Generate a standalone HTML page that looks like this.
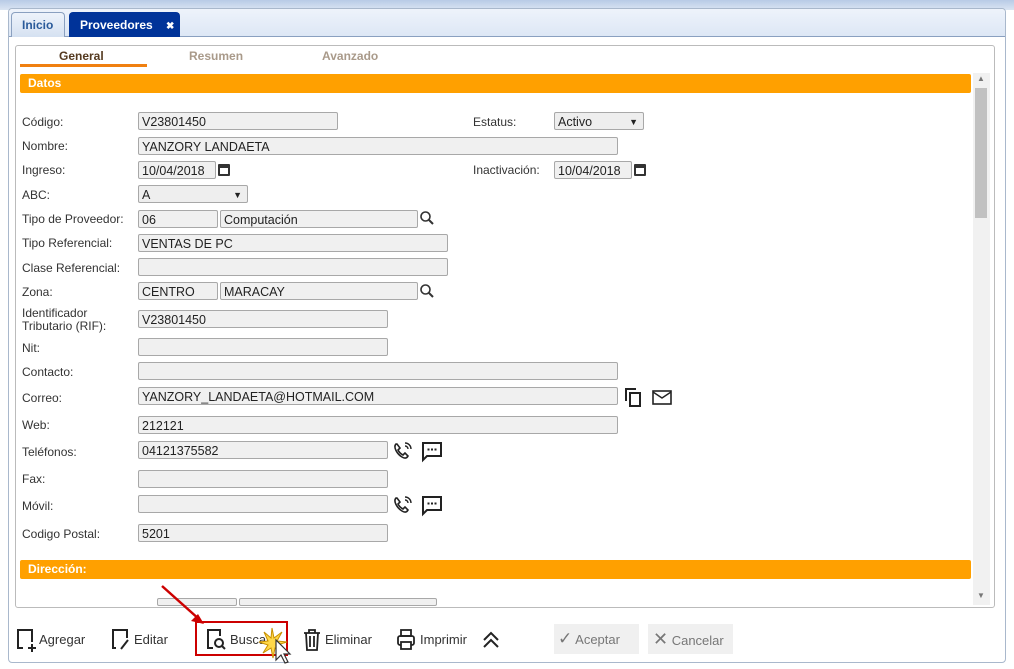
<!DOCTYPE html><html><head><meta charset="utf-8"><style>
*{box-sizing:border-box;margin:0;padding:0}
body{width:1014px;height:669px;overflow:hidden;background:#fff;font-family:"Liberation Sans",sans-serif;font-size:12px;color:#333;position:relative}
.a{position:absolute}
.top{left:0;top:0;width:1014px;height:10px;background:linear-gradient(#b8cbe6,#dbe5f3)}
.frame{left:8px;top:8px;width:998px;height:655px;border:1px solid #a9b8cc;border-radius:4px;background:#fff}
.tabbar{left:9px;top:9px;width:996px;height:28px;background:linear-gradient(#eef3fb,#dde7f5);border-bottom:1px solid #8aa0c0;border-radius:4px 4px 0 0}
.tab{height:25px;top:12px;border:1px solid #8aa0c0;border-bottom:none;border-radius:4px 4px 0 0;font-weight:bold;font-size:12px;line-height:24px;padding-left:10px}
.panel{left:15px;top:45px;width:980px;height:563px;border:1px solid #bbb;border-radius:3px}
.st{top:49px;font-weight:bold;font-size:12px;color:#a99a8a}
.bar{left:20px;width:951px;height:19px;background:#ffa000;color:#fff;font-weight:bold;font-size:12px;line-height:19px;padding-left:8px;border-radius:2px}
.l{left:22px;font-size:12px;color:#333}
.i{height:18px;background:#f0f0f0;border:1px solid #a8a8a8;border-radius:2px;font-size:12.5px;line-height:18px;padding-left:3px;color:#222}
.btn{top:626px;font-size:13px;color:#333;height:28px;line-height:28px}
.cal{width:12px;height:12px;border:2px solid #333;border-top-width:4px;border-radius:1px}
</style></head><body>
<div class="a top"></div>
<div class="a frame"></div>
<div class="a tabbar"></div>
<div class="a tab" style="left:11px;width:54px;background:linear-gradient(#eef3fb,#d5e1f1);color:#2a5a9a">Inicio</div>
<div class="a tab" style="left:69px;width:111px;background:#003399;color:#fff;border-color:#003399">Proveedores <span style="margin-left:10px;font-size:10px">✖</span></div>
<div class="a panel"></div>
<div class="a st" style="left:59px;color:#553a20">General</div>
<div class="a" style="left:20px;top:64px;width:127px;height:3px;background:#f08010"></div>
<div class="a st" style="left:189px">Resumen</div>
<div class="a st" style="left:322px">Avanzado</div>
<div class="a bar" style="top:74px">Datos</div>
<div class="a bar" style="top:560px">Dirección:</div>
<div class="a" style="left:973px;top:73px;width:17px;height:532px;background:#f1f1f1"></div>
<div class="a" style="left:975px;top:88px;width:12px;height:130px;background:#c1c1c1"></div>
<div class="a" style="left:977px;top:74px;font-size:8px;color:#777">▲</div>
<div class="a" style="left:977px;top:591px;font-size:8px;color:#777">▼</div>

<div class="a l" style="top:115px">Código:</div><div class="a i" style="left:138px;top:112px;width:200px">V23801450</div>
<div class="a l" style="left:473px;top:115px">Estatus:</div><div class="a i" style="left:554px;top:112px;width:90px;background:#eee">Activo<span style="position:absolute;right:5px;font-size:9px">▼</span></div>
<div class="a l" style="top:139px">Nombre:</div><div class="a i" style="left:138px;top:137px;width:480px">YANZORY LANDAETA</div>
<div class="a l" style="top:163px">Ingreso:</div><div class="a i" style="left:138px;top:161px;width:78px">10/04/2018</div>
<div class="a cal" style="left:218px;top:164px"></div>
<div class="a l" style="left:473px;top:163px">Inactivación:</div><div class="a i" style="left:554px;top:161px;width:78px">10/04/2018</div>
<div class="a cal" style="left:634px;top:164px"></div>
<div class="a l" style="top:188px">ABC:</div><div class="a i" style="left:138px;top:185px;width:110px;background:#eee">A<span style="position:absolute;right:5px;font-size:9px">▼</span></div>
<div class="a l" style="top:212px">Tipo de Proveedor:</div><div class="a i" style="left:138px;top:210px;width:80px">06</div><div class="a i" style="left:220px;top:210px;width:198px">Computación</div>
<svg class="a" style="left:419px;top:210px" width="16" height="16"><circle cx="6.5" cy="6.5" r="4.5" fill="none" stroke="#333" stroke-width="1.6"/><path d="M10 10l4 4" stroke="#333" stroke-width="2"/></svg>
<div class="a l" style="top:236px">Tipo Referencial:</div><div class="a i" style="left:138px;top:234px;width:310px">VENTAS DE PC</div>
<div class="a l" style="top:261px">Clase Referencial:</div><div class="a i" style="left:138px;top:258px;width:310px"></div>
<div class="a l" style="top:285px">Zona:</div><div class="a i" style="left:138px;top:282px;width:80px">CENTRO</div><div class="a i" style="left:220px;top:282px;width:198px">MARACAY</div>
<svg class="a" style="left:419px;top:283px" width="16" height="16"><circle cx="6.5" cy="6.5" r="4.5" fill="none" stroke="#333" stroke-width="1.6"/><path d="M10 10l4 4" stroke="#333" stroke-width="2"/></svg>
<div class="a l" style="top:307px;line-height:13px">Identificador<br>Tributario (RIF):</div><div class="a i" style="left:138px;top:310px;width:250px">V23801450</div>
<div class="a l" style="top:341px">Nit:</div><div class="a i" style="left:138px;top:338px;width:250px"></div>
<div class="a l" style="top:365px">Contacto:</div><div class="a i" style="left:138px;top:362px;width:480px"></div>
<div class="a l" style="top:391px">Correo:</div><div class="a i" style="left:138px;top:387px;width:480px">YANZORY_LANDAETA@HOTMAIL.COM</div>
<svg class="a" style="left:624px;top:387px" width="20" height="22"><path d="M2 14V2h10" fill="none" stroke="#222" stroke-width="2"/><rect x="6" y="6" width="10" height="13" fill="none" stroke="#222" stroke-width="2"/></svg>
<svg class="a" style="left:651px;top:389px" width="22" height="18"><rect x="2" y="2" width="18" height="13" fill="none" stroke="#222" stroke-width="1.6"/><path d="M2 3l9 6 9-6" fill="none" stroke="#222" stroke-width="1.4"/></svg>
<div class="a l" style="top:418px">Web:</div><div class="a i" style="left:138px;top:416px;width:480px">212121</div>
<div class="a l" style="top:445px">Teléfonos:</div><div class="a i" style="left:138px;top:441px;width:250px">04121375582</div>
<div class="a l" style="top:472px">Fax:</div><div class="a i" style="left:138px;top:470px;width:250px"></div>
<div class="a l" style="top:499px">Móvil:</div><div class="a i" style="left:138px;top:495px;width:250px"></div>
<div class="a l" style="top:527px">Codigo Postal:</div><div class="a i" style="left:138px;top:524px;width:250px">5201</div>
<svg class="a" style="left:392px;top:440px" width="22" height="22"><path d="M4 4c-3 3 1 10 6 13 3 2 5 1 6-1l-3-3-2 2c-2-1-4-3-5-5l2-2-3-4z" fill="none" stroke="#222" stroke-width="1.6"/><path d="M13 3a6 6 0 0 1 6 6M13 6a3 3 0 0 1 3 3" fill="none" stroke="#222" stroke-width="1.4"/></svg>
<svg class="a" style="left:421px;top:441px" width="22" height="22"><path d="M2 2h18v13H6l-4 4z" fill="none" stroke="#222" stroke-width="2"/><path d="M6.5 8.5h2M10 8.5h2M13.5 8.5h2" stroke="#222" stroke-width="2"/></svg>
<svg class="a" style="left:392px;top:494px" width="22" height="22"><path d="M4 4c-3 3 1 10 6 13 3 2 5 1 6-1l-3-3-2 2c-2-1-4-3-5-5l2-2-3-4z" fill="none" stroke="#222" stroke-width="1.6"/><path d="M13 3a6 6 0 0 1 6 6M13 6a3 3 0 0 1 3 3" fill="none" stroke="#222" stroke-width="1.4"/></svg>
<svg class="a" style="left:421px;top:495px" width="22" height="22"><path d="M2 2h18v13H6l-4 4z" fill="none" stroke="#222" stroke-width="2"/><path d="M6.5 8.5h2M10 8.5h2M13.5 8.5h2" stroke="#222" stroke-width="2"/></svg>
<div class="a i" style="left:157px;top:598px;width:80px;height:8px"></div><div class="a i" style="left:239px;top:598px;width:198px;height:8px"></div>

<svg class="a" style="left:15px;top:626px" width="22" height="28"><path d="M8 22H3V4h14v12" fill="none" stroke="#222" stroke-width="2"/><path d="M17 18v8M13 22h8" stroke="#222" stroke-width="2"/></svg>
<div class="a btn" style="left:39px">Agregar</div>
<svg class="a" style="left:110px;top:626px" width="22" height="28"><path d="M6 22H3V4h14v8" fill="none" stroke="#222" stroke-width="2"/><path d="M18 14l-7 9" stroke="#222" stroke-width="2"/></svg>
<div class="a btn" style="left:134px">Editar</div>
<div class="a" style="left:195px;top:621px;width:93px;height:35px;border:2px solid #c00"></div>
<svg class="a" style="left:205px;top:626px" width="22" height="28"><path d="M8 22H3V4h12v6" fill="none" stroke="#222" stroke-width="2"/><circle cx="14" cy="17" r="4" fill="none" stroke="#222" stroke-width="2"/><path d="M17 20l3 3" stroke="#222" stroke-width="2"/></svg>
<div class="a btn" style="left:230px">Buscar</div>
<svg class="a" style="left:258px;top:626px" width="40" height="42"><path d="M14 2l2 10 8-6-5 9 10 1-10 3 6 8-8-5-2 10-2-10-8 5 5-8-9-3 9-1-4-9 7 6z" fill="#ffd84a" stroke="#c89000" stroke-width="1"/><path d="M18 14v20l5-5 4 8 3-1-4-8h6z" fill="#fff" stroke="#333" stroke-width="1.2"/></svg>
<svg class="a" style="left:160px;top:584px" width="50" height="44"><path d="M2 2l38 34" stroke="#c00" stroke-width="2.5"/><path d="M44 40l-13-3 7-7z" fill="#c00"/></svg>
<svg class="a" style="left:302px;top:628px" width="20" height="24"><path d="M2 5h16M7 5V2h6v3M4 5l1 17h10l1-17M8 8v11M12 8v11" fill="none" stroke="#222" stroke-width="1.8"/></svg>
<div class="a btn" style="left:325px">Eliminar</div>
<svg class="a" style="left:396px;top:628px" width="20" height="24"><rect x="5" y="2" width="10" height="6" fill="none" stroke="#222" stroke-width="1.8"/><rect x="2" y="8" width="16" height="9" rx="2" fill="none" stroke="#222" stroke-width="1.8"/><rect x="5" y="14" width="10" height="7" fill="#fff" stroke="#222" stroke-width="1.8"/></svg>
<div class="a btn" style="left:420px">Imprimir</div>
<svg class="a" style="left:481px;top:630px" width="20" height="20"><path d="M3 10l7-7 7 7M3 17l7-7 7 7" fill="none" stroke="#222" stroke-width="2"/></svg>
<div class="a" style="left:554px;top:624px;width:85px;height:30px;background:#f0f0f0"></div>
<div class="a btn" style="left:558px;top:625px;color:#777"><span style="font-size:17px">✓</span> Aceptar</div>
<div class="a" style="left:648px;top:624px;width:85px;height:30px;background:#f0f0f0"></div>
<div class="a btn" style="left:653px;top:625px;color:#777"><span style="font-size:18px">✕</span> Cancelar</div>
</body></html>
